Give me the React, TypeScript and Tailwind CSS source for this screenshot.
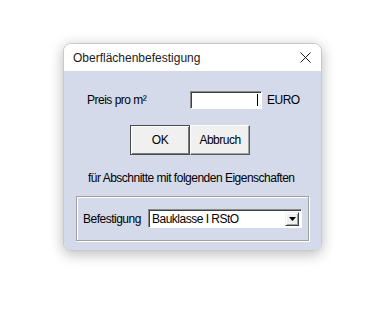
import React from "react";

const font = { fontFamily: '"Liberation Sans", Arial, sans-serif' };

export default function App() {
  return (
    <div className="w-[376px] h-[316px] bg-white pt-[43px] pl-[63px]" style={font}>
      <div className="w-[259px] h-[208px] rounded-[8px] border border-[#c9c9c9] shadow-[0_3px_14px_rgba(0,0,0,0.28)] overflow-hidden flex flex-col bg-white">
        {/* Title bar */}
        <div className="h-[27px] shrink-0 flex items-center justify-between pl-[9px] pr-[10px] bg-white">
          <span className="text-[12px] text-[#1b1b1b] leading-none">Oberflächenbefestigung</span>
          <svg width="11" height="11" viewBox="0 0 11 11" className="text-[#1b1b1b]">
            <path d="M0.5 0.5 L10.5 10.5 M10.5 0.5 L0.5 10.5" stroke="currentColor" strokeWidth="1" fill="none" />
          </svg>
        </div>
        {/* Client */}
        <div className="flex-1 bg-[#d5daea] flex flex-col text-[12px] text-black tracking-[-0.5px]">
          {/* Row 1 */}
          <div className="mt-[20px] h-[18px] flex items-center pl-[23px]">
            <span className="w-[103px] leading-none">Preis pro m²</span>
            <div className="w-[72px] h-[18px] bg-white border-t border-l border-[#8a8a8a] border-b border-r border-b-white border-r-white shadow-[inset_1px_1px_0_#404040] flex items-center justify-end pr-[3px]">
              <div className="w-[1px] h-[12px] bg-black" />
            </div>
            <span className="ml-[5px] leading-none">EURO</span>
          </div>
          {/* Row 2 buttons */}
          <div className="mt-[16px] flex pl-[66px]">
            <div className="w-[60px] h-[30px] bg-[#f0f0f0] border border-[#4a4a4a] shadow-[inset_1px_1px_0_#ffffff,inset_-1px_-1px_0_#7a7a7a] flex items-center justify-center">
              <span className="leading-none">OK</span>
            </div>
            <div className="w-[60px] h-[30px] bg-[#f0f0f0] border-t border-l border-white border-b border-r border-b-[#5a5a5a] border-r-[#5a5a5a] shadow-[inset_-1px_-1px_0_#a0a0a0] flex items-center justify-center">
              <span className="leading-none">Abbruch</span>
            </div>
          </div>
          {/* Row 3 text */}
          <div className="mt-[16px] pl-[24px] h-[14px] leading-[14px]">
            für Abschnitte mit folgenden Eigenschaften
          </div>
          {/* Group */}
          <div className="mt-[11px] ml-[12px] w-[233px] h-[45px] border border-[#a0a0a0] shadow-[inset_1px_1px_0_#ffffff,1px_1px_0_#ffffff] flex items-center pl-[6px]">
            <span className="w-[65px] leading-none">Befestigung</span>
            <div className="w-[154px] h-[19px] bg-white border-t border-l border-[#8a8a8a] border-b border-r border-b-white border-r-white shadow-[inset_1px_1px_0_#404040] flex items-center pl-[3px] pr-[2px]">
              <span className="flex-1 leading-none">Bauklasse I RStO</span>
              <div className="w-[14px] h-[14px] bg-[#f0f0f0] border-t border-l border-[#f0f0f0] border-b border-r border-b-[#404040] border-r-[#404040] shadow-[inset_1px_1px_0_#ffffff,inset_-1px_-1px_0_#a0a0a0] flex items-center justify-center">
                <svg width="7" height="4" viewBox="0 0 7 4">
                  <path d="M0 0 H7 L3.5 4 Z" fill="#000" />
                </svg>
              </div>
            </div>
          </div>
        </div>
      </div>
    </div>
  );
}
